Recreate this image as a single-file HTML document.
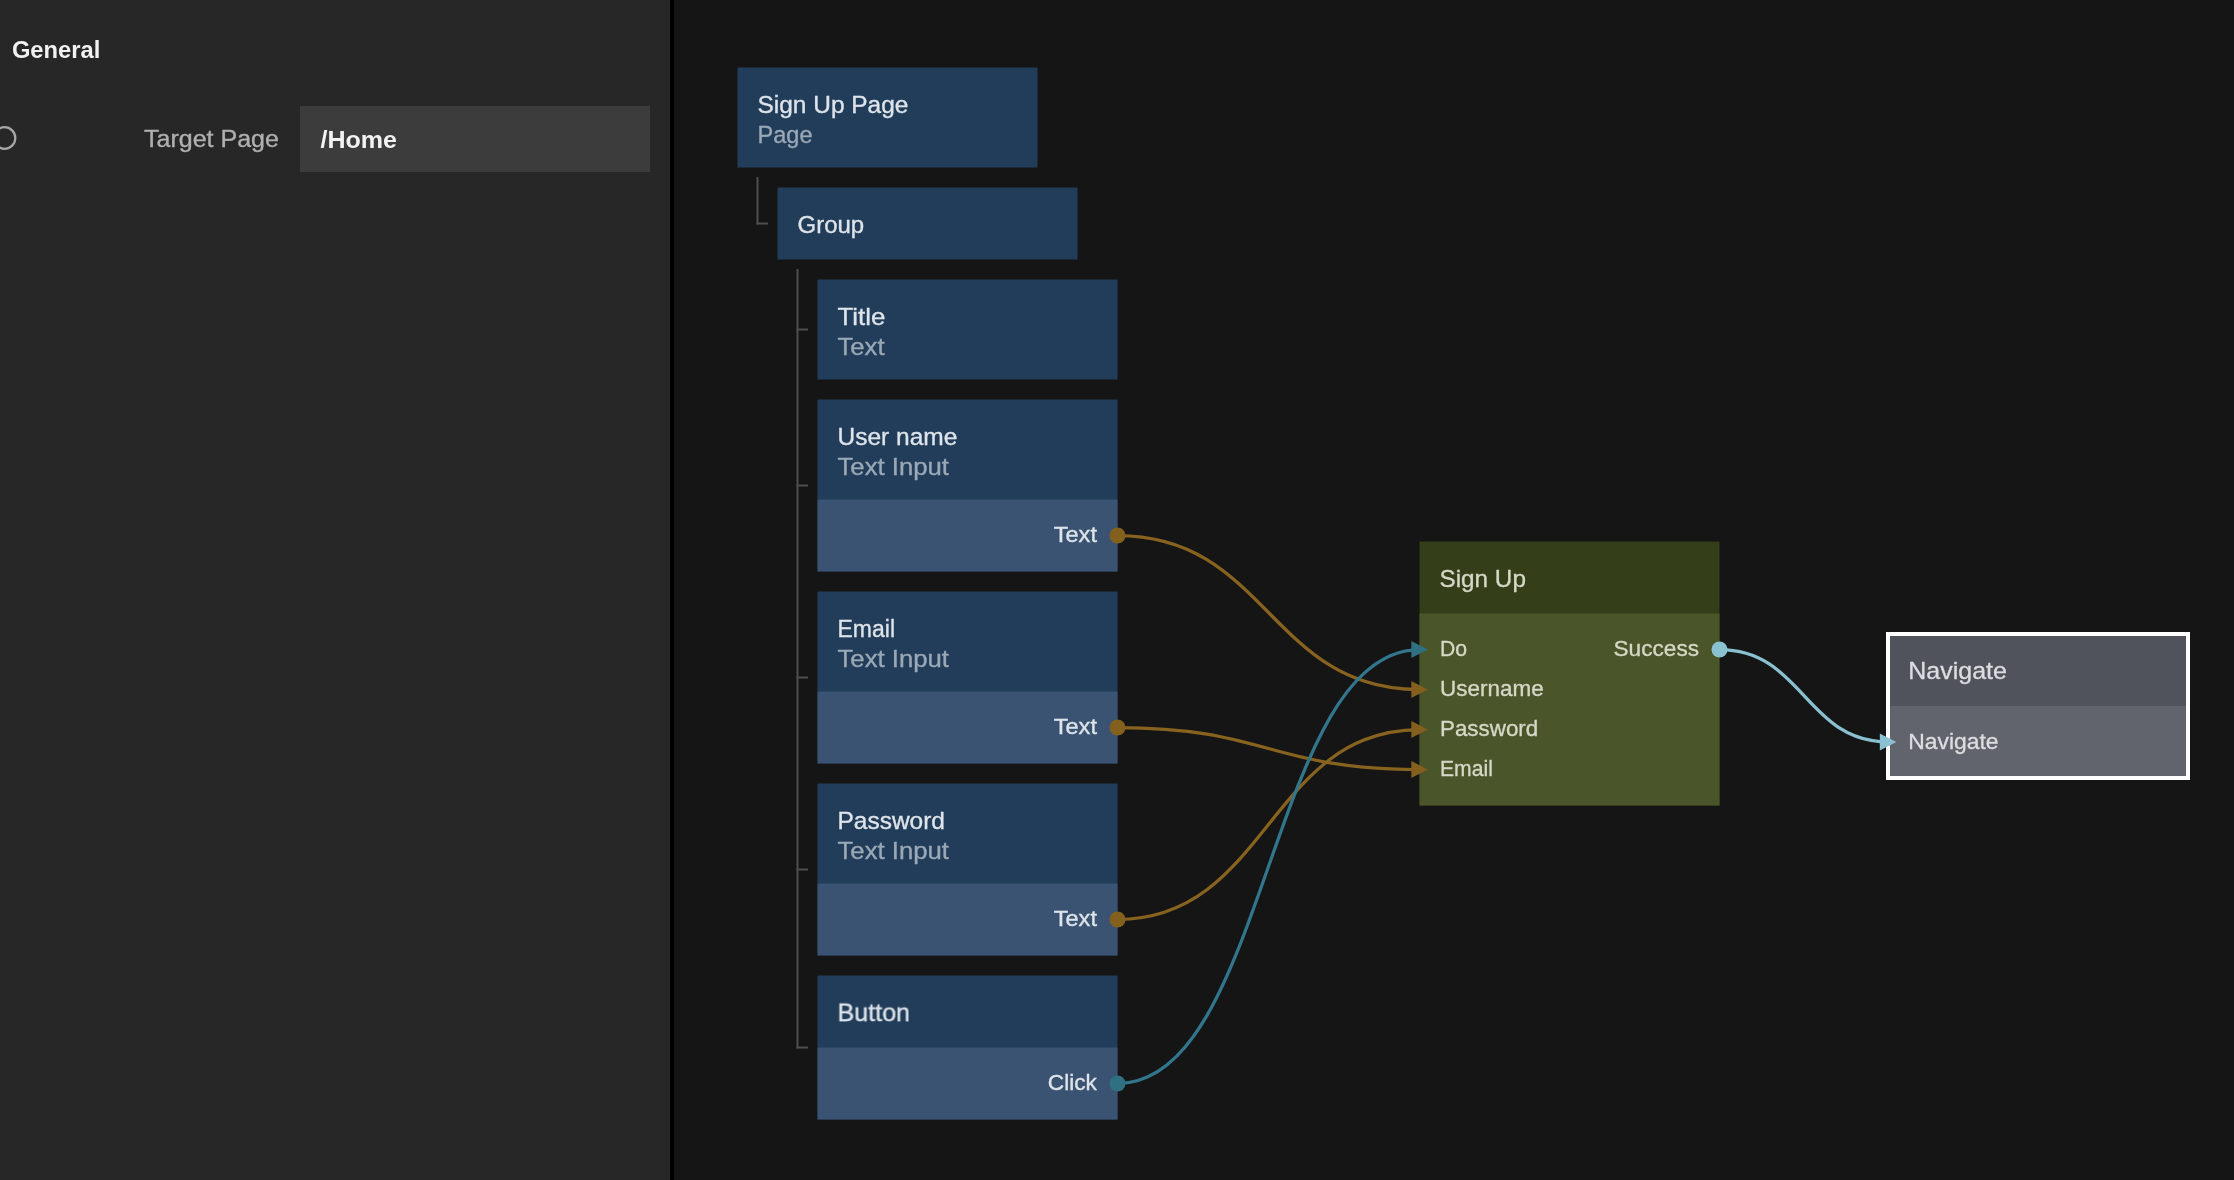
<!DOCTYPE html><html><head><meta charset="utf-8"><style>
html,body{margin:0;padding:0;width:2234px;height:1180px;overflow:hidden;background:#151515;}
svg{position:absolute;left:0;top:0;will-change:transform;-webkit-font-smoothing:antialiased;}
text{font-family:"Liberation Sans",sans-serif;}
</style></head><body>
<svg width="2234" height="1180" viewBox="0 0 2234 1180">
<rect x="0" y="0" width="670" height="1180" fill="#272727"/>
<rect x="670" y="0" width="4" height="1180" fill="#000000"/>
<text transform="translate(11.90 58.20) scale(0.989933 1)" font-size="24" font-weight="bold" fill="#f2f2f2" stroke="#f2f2f2" stroke-width="0">General</text>
<circle cx="4.5" cy="138" r="10.8" fill="none" stroke="#a8a8a8" stroke-width="2.2"/>
<text transform="translate(144.00 147.30) scale(1.00111 0.97)" font-size="25" fill="#b0b0b0" stroke="#b0b0b0" stroke-width="0.35">Target Page</text>
<rect x="300" y="106" width="350" height="66" fill="#3c3c3c"/>
<text transform="translate(320.50 148.20) scale(1.00262 0.96)" font-size="25" font-weight="bold" fill="#f2f2f2" stroke="#f2f2f2" stroke-width="0">/Home</text>
<path d="M757.5 177.0 V224.5" stroke="#4e4e4e" stroke-width="2" fill="none"/>
<path d="M756.5 223.5 H768.0" stroke="#4e4e4e" stroke-width="2" fill="none"/>
<path d="M797.5 269.0 V1048.5" stroke="#4e4e4e" stroke-width="2" fill="none"/>
<path d="M796.5 329.5 H808.0" stroke="#4e4e4e" stroke-width="2" fill="none"/>
<path d="M796.5 485.5 H808.0" stroke="#4e4e4e" stroke-width="2" fill="none"/>
<path d="M796.5 677.5 H808.0" stroke="#4e4e4e" stroke-width="2" fill="none"/>
<path d="M796.5 869.5 H808.0" stroke="#4e4e4e" stroke-width="2" fill="none"/>
<path d="M796.5 1047.5 H808.0" stroke="#4e4e4e" stroke-width="2" fill="none"/>
<rect x="737.5" y="67.5" width="300" height="100" fill="#213d5a"/>
<text transform="translate(757.50 113.10) scale(0.978655 0.97)" font-size="25" fill="#dfe4ea" stroke="#dfe4ea" stroke-width="0.35">Sign Up Page</text>
<text transform="translate(757.50 143.00) scale(0.942979 0.97)" font-size="25" fill="#9ba8b6" stroke="#9ba8b6" stroke-width="0.35">Page</text>
<rect x="777.5" y="187.5" width="300" height="72" fill="#213d5a"/>
<text transform="translate(797.50 233.10) scale(0.959198 0.97)" font-size="25" fill="#dfe4ea" stroke="#dfe4ea" stroke-width="0.35">Group</text>
<rect x="817.5" y="279.5" width="300" height="100" fill="#213d5a"/>
<text transform="translate(837.50 325.10) scale(1.03537 0.97)" font-size="25" fill="#dfe4ea" stroke="#dfe4ea" stroke-width="0.35">Title</text>
<text transform="translate(837.50 355.00) scale(1.02597 0.97)" font-size="25" fill="#9ba8b6" stroke="#9ba8b6" stroke-width="0.35">Text</text>
<rect x="817.5" y="399.5" width="300" height="172" fill="#213d5a"/>
<text transform="translate(837.50 445.10) scale(0.98124 0.97)" font-size="25" fill="#dfe4ea" stroke="#dfe4ea" stroke-width="0.35">User name</text>
<text transform="translate(837.50 475.00) scale(1.02897 0.97)" font-size="25" fill="#9ba8b6" stroke="#9ba8b6" stroke-width="0.35">Text Input</text>
<rect x="817.5" y="499.5" width="300" height="72" fill="#3a5372"/>
<text transform="translate(1053.66 542.30) scale(1.02703 0.96)" font-size="23" fill="#dfe4ea" stroke="#dfe4ea" stroke-width="0.35">Text</text>
<rect x="817.5" y="591.5" width="300" height="172" fill="#213d5a"/>
<text transform="translate(837.50 637.10) scale(0.92 0.97)" font-size="25" fill="#dfe4ea" stroke="#dfe4ea" stroke-width="0.35">Email</text>
<text transform="translate(837.50 667.00) scale(1.02897 0.97)" font-size="25" fill="#9ba8b6" stroke="#9ba8b6" stroke-width="0.35">Text Input</text>
<rect x="817.5" y="691.5" width="300" height="72" fill="#3a5372"/>
<text transform="translate(1053.66 734.30) scale(1.02703 0.96)" font-size="23" fill="#dfe4ea" stroke="#dfe4ea" stroke-width="0.35">Text</text>
<rect x="817.5" y="783.5" width="300" height="172" fill="#213d5a"/>
<text transform="translate(837.50 829.10) scale(0.97911 0.97)" font-size="25" fill="#dfe4ea" stroke="#dfe4ea" stroke-width="0.35">Password</text>
<text transform="translate(837.50 859.00) scale(1.02897 0.97)" font-size="25" fill="#9ba8b6" stroke="#9ba8b6" stroke-width="0.35">Text Input</text>
<rect x="817.5" y="883.5" width="300" height="72" fill="#3a5372"/>
<text transform="translate(1053.66 926.30) scale(1.02703 0.96)" font-size="23" fill="#dfe4ea" stroke="#dfe4ea" stroke-width="0.35">Text</text>
<rect x="817.5" y="975.5" width="300" height="144" fill="#213d5a"/>
<text transform="translate(837.50 1021.10) scale(1.00482 0.97)" font-size="25" fill="#dfe4ea" stroke="#dfe4ea" stroke-width="0.35">Button</text>
<rect x="817.5" y="1047.5" width="300" height="72" fill="#3a5372"/>
<text transform="translate(1047.84 1090.30) scale(0.985075 0.96)" font-size="23" fill="#dfe4ea" stroke="#dfe4ea" stroke-width="0.35">Click</text>
<rect x="1419.5" y="541.5" width="300" height="264" fill="#343f19"/>
<rect x="1419.5" y="613.5" width="300" height="192" fill="#4a552a"/>
<text transform="translate(1439.50 587.10) scale(0.972004 0.97)" font-size="25" fill="#d5d8c7" stroke="#d5d8c7" stroke-width="0.35">Sign Up</text>
<text transform="translate(1440.00 656.10) scale(0.92437 0.96)" font-size="23" fill="#d5d8c7" stroke="#d5d8c7" stroke-width="0.35">Do</text>
<text transform="translate(1440.00 696.10) scale(0.977924 0.96)" font-size="23" fill="#d5d8c7" stroke="#d5d8c7" stroke-width="0.35">Username</text>
<text transform="translate(1440.00 736.10) scale(0.972866 0.96)" font-size="23" fill="#d5d8c7" stroke="#d5d8c7" stroke-width="0.35">Password</text>
<text transform="translate(1440.00 776.10) scale(0.92 0.96)" font-size="23" fill="#d5d8c7" stroke="#d5d8c7" stroke-width="0.35">Email</text>
<text transform="translate(1613.54 656.10) scale(0.983381 0.96)" font-size="23" fill="#d5d8c7" stroke="#d5d8c7" stroke-width="0.35">Success</text>
<rect x="1888.0" y="634.0" width="300" height="72" fill="#50535c"/>
<rect x="1888.0" y="706.0" width="300" height="72" fill="#61646d"/>
<rect x="1888.0" y="634.0" width="300" height="144" fill="none" stroke="#ffffff" stroke-width="4"/>
<text transform="translate(1908.30 679.10) scale(0.99899 0.97)" font-size="25" fill="#dcdde0" stroke="#dcdde0" stroke-width="0.35">Navigate</text>
<text transform="translate(1908.30 749.00) scale(0.995063 0.96)" font-size="23" fill="#dcdde0" stroke="#dcdde0" stroke-width="0.35">Navigate</text>
<path d="M1117.5 535.5 C1267.5 535.5 1269.5 689.5 1419.5 689.5" stroke="#88631f" stroke-width="3.25" fill="none"/>
<path d="M1117.5 727.5 C1267.5 727.5 1269.5 769.5 1419.5 769.5" stroke="#88631f" stroke-width="3.25" fill="none"/>
<path d="M1117.5 919.5 C1267.5 919.5 1269.5 729.5 1419.5 729.5" stroke="#88631f" stroke-width="3.25" fill="none"/>
<path d="M1117.5 1083.5 C1267.5 1083.5 1269.5 649.5 1419.5 649.5" stroke="#31768c" stroke-width="3.25" fill="none"/>
<path d="M1719.5 649.6 C1803.5 649.6 1805.0 742.0 1889.0 742.0" stroke="#8ac1d1" stroke-width="3.25" fill="none"/>
<circle cx="1117.5" cy="535.5" r="8" fill="#84601f"/>
<circle cx="1117.5" cy="727.5" r="8" fill="#84601f"/>
<circle cx="1117.5" cy="919.5" r="8" fill="#84601f"/>
<circle cx="1117.5" cy="1083.5" r="8" fill="#2f7083"/>
<circle cx="1719.5" cy="649.5" r="8" fill="#8ac1d1"/>
<path d="M1411.3 641.0 L1427.8 649.5 L1411.3 658.0 Z" fill="#2f7083"/>
<path d="M1411.3 681.0 L1427.8 689.5 L1411.3 698.0 Z" fill="#84601f"/>
<path d="M1411.3 721.0 L1427.8 729.5 L1411.3 738.0 Z" fill="#84601f"/>
<path d="M1411.3 761.0 L1427.8 769.5 L1411.3 778.0 Z" fill="#84601f"/>
<path d="M1879.8 733.5 L1896.3 742.0 L1879.8 750.5 Z" fill="#8ac1d1"/>
</svg></body></html>
